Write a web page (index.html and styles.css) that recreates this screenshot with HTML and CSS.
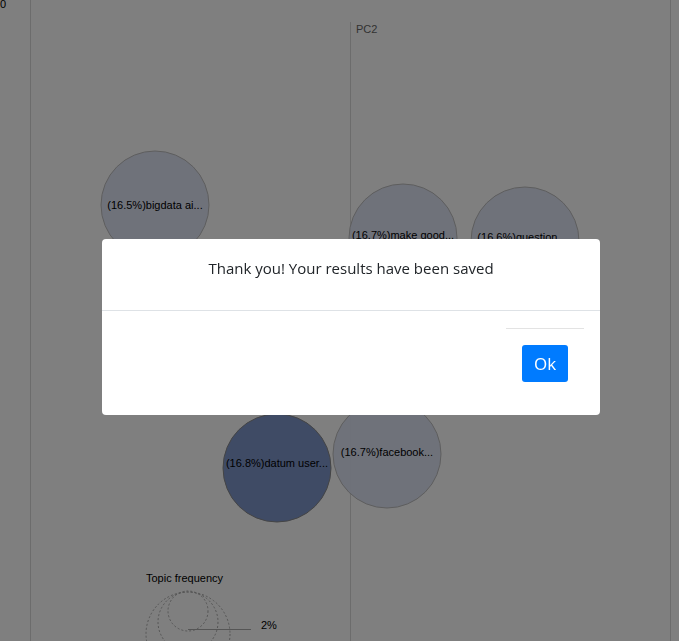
FILE: index.html
```html
<!DOCTYPE html>
<html>
<head>
<meta charset="utf-8">
<link rel="stylesheet" href="styles.css">
</head>
<body>
<div class="chart">
  <svg class="plot" width="679" height="641" viewBox="0 0 679 641">
    <text class="tick" x="0" y="8">0</text>
    <line class="axis" x1="30.5" y1="0" x2="30.5" y2="641"/>
    <line class="axis" x1="670.5" y1="0" x2="670.5" y2="641"/>
    <line class="axis" x1="350.5" y1="22" x2="350.5" y2="641"/>
    <text class="axis-label" x="356" y="33">PC2</text>

    <circle class="topic" cx="155" cy="205" r="54"/>
    <text class="topic-label" x="155" y="209">(16.5%)bigdata ai...</text>
    <circle class="topic" cx="403" cy="238" r="54"/>
    <text class="topic-label" x="403" y="239">(16.7%)make good...</text>
    <circle class="topic" cx="525" cy="241" r="54"/>
    <text class="topic-label" x="522" y="241">(16.6%)question...</text>
    <circle class="topic" cx="350" cy="330" r="54"/>
    <text class="topic-label" x="350" y="334">(16.7%)topic...</text>
    <circle class="topic active" cx="277" cy="468" r="54"/>
    <text class="topic-label" x="277" y="467">(16.8%)datum user...</text>
    <circle class="topic" cx="387" cy="454" r="54"/>
    <text class="topic-label" x="387" y="456">(16.7%)facebook...</text>

    <text class="legend-title" x="146" y="582">Topic frequency</text>
    <circle class="legend-circle" cx="188" cy="634" r="42"/>
    <circle class="legend-circle" cx="188" cy="622" r="30"/>
    <circle class="legend-circle" cx="188" cy="611" r="20"/>
    <line class="legend-line" x1="188" y1="629.5" x2="251" y2="629.5"/>
    <text class="legend-value" x="261" y="629">2%</text>
  </svg>
</div>

<div class="backdrop">
  <div class="modal">
    <div class="modal-header">
      <h5 class="modal-title">Thank you! Your results have been saved</h5>
    </div>
    <div class="modal-footer">
      <div class="rule"></div>
      <button class="btn">Ok</button>
    </div>
  </div>
</div>
</body>
</html>
```

FILE: styles.css
```css
html, body {
  margin: 0;
  padding: 0;
  background: #fff;
  overflow: hidden;
}

.chart {
  width: 679px;
  height: 641px;
}

.plot {
  display: block;
  font-family: "Liberation Sans", Arial, sans-serif;
}

.tick {
  font-size: 11px;
  fill: #000;
}

.axis {
  stroke: #d8d8d8;
  stroke-width: 1;
}

.axis-label {
  font-size: 11px;
  fill: #666;
}

.topic {
  fill: #dde3f4;
  stroke: #bcbcbc;
  stroke-width: 1;
  fill-opacity: 0.95;
}

.topic.active {
  fill: #7890c8;
  stroke: #8a8a8a;
}

.topic-label {
  font-size: 11px;
  fill: #000;
  text-anchor: middle;
}

.legend-title {
  font-size: 11px;
  fill: #000;
}

.legend-circle {
  fill: none;
  stroke: #aaa;
  stroke-width: 1;
  stroke-dasharray: 2 2;
}

.legend-line {
  stroke: #aaa;
  stroke-width: 1;
}

.legend-value {
  font-size: 11px;
  fill: #000;
}

.backdrop {
  position: fixed;
  inset: 0;
  background: rgba(0, 0, 0, 0.5);
}

.modal {
  box-sizing: border-box;
  width: 498px;
  margin: 239px 0 0 102px;
  background: #fff;
  border-radius: 4px;
  overflow: hidden;
  font-family: "Open Sans", "Noto Sans", sans-serif;
  color: #212529;
}

.modal-header {
  height: 72px;
  box-sizing: border-box;
  padding: 16px 16px 0;
  border-bottom: 1px solid #dee2e6;
}

.modal-title {
  margin: 0;
  font-size: 15px;
  font-weight: 400;
  line-height: 26px;
  text-align: center;
}

.modal-footer {
  display: flex;
  flex-direction: column;
  align-items: flex-end;
  height: 104px;
  box-sizing: border-box;
  padding: 16px 16px 0;
}

.rule {
  width: 78px;
  height: 0;
  margin-top: 1px;
  border-top: 1px solid #e3e3e3;
}

.btn {
  margin: 16px 16px 0 0;
  width: 46px;
  height: 37px;
  padding: 0;
  border: none;
  border-radius: 3px;
  background: #007bff;
  color: #fff;
  font-family: "Open Sans", "Noto Sans", sans-serif;
  font-size: 17px;
  line-height: 37px;
}
```
